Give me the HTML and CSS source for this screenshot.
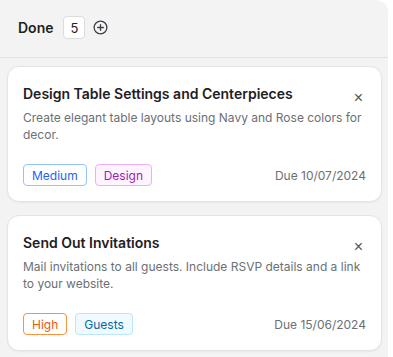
FILE: index.html
```html
<!DOCTYPE html>
<html lang="en">
<head>
    <meta charset="UTF-8">
    <meta name="viewport" content="width=device-width, initial-scale=1.0">
    <title>Board - Done</title>
    <link rel="stylesheet" href="styles.css">
</head>
<body>
    <div class="column">
        <div class="column-header">
            <h2>Done</h2>
            <span class="count">5</span>
            <button class="add-btn" aria-label="Add task">
                <svg width="15" height="15" viewBox="0 0 16 16" fill="none" stroke="#3f3f46" stroke-width="1.4" stroke-linecap="round">
                    <circle cx="8" cy="8" r="6.8"/>
                    <path d="M8 5v6M5 8h6"/>
                </svg>
            </button>
        </div>

        <div class="cards">
            <div class="card">
                <div class="card-top">
                    <h3>Design Table Settings and Centerpieces</h3>
                    <button class="close-btn" aria-label="Remove">&times;</button>
                </div>
                <p class="desc">Create elegant table layouts using Navy and Rose colors for decor.</p>
                <div class="card-foot">
                    <span class="tag tag-medium">Medium</span>
                    <span class="tag tag-design">Design</span>
                    <span class="due">Due 10/07/2024</span>
                </div>
            </div>

            <div class="card">
                <div class="card-top">
                    <h3>Send Out Invitations</h3>
                    <button class="close-btn" aria-label="Remove">&times;</button>
                </div>
                <p class="desc">Mail invitations to all guests. Include RSVP details and a link to your website.</p>
                <div class="card-foot">
                    <span class="tag tag-high">High</span>
                    <span class="tag tag-guests">Guests</span>
                    <span class="due">Due 15/06/2024</span>
                </div>
            </div>
        </div>
    </div>
</body>
</html>
```

FILE: styles.css
```css
body {
    margin: 0;
    font-family: Inter, "Noto Sans", Arial, sans-serif;
    background: #fff;
    color: #1f1f1f;
}

.column {
    width: 388px;
    height: 357px;
    background: #f3f3f3;
    border-top-right-radius: 12px;
    box-sizing: border-box;
    overflow: hidden;
}

.column-header {
    display: flex;
    align-items: center;
    height: 58px;
    padding: 0 18px 2px;
    border-bottom: 1px solid #e2e2e2;
    box-sizing: border-box;
}

.column-header h2 {
    margin: 0 10px 0 0;
    font-size: 14px;
    font-weight: 600;
    color: #1f1f1f;
}

.count {
    display: inline-flex;
    align-items: center;
    justify-content: center;
    width: 22px;
    height: 23px;
    box-sizing: border-box;
    background: #fff;
    border: 1px solid #dcdcdc;
    border-radius: 4px;
    font-size: 13px;
    color: #222;
}

.add-btn {
    display: flex;
    align-items: center;
    background: none;
    border: none;
    padding: 0;
    margin-left: 8px;
    cursor: pointer;
}

.cards {
    display: flex;
    flex-direction: column;
    gap: 13px;
    padding: 8px 6px 0 7px;
}

.card {
    background: #fff;
    border: 1px solid #e4e4e4;
    border-radius: 12px;
    padding: 17px 15px 15px;
    box-shadow: 0 1px 2px rgba(0,0,0,0.05);
}

.card-top {
    display: flex;
    justify-content: space-between;
    align-items: flex-start;
}

.card-top h3 {
    margin: 0;
    font-size: 14px;
    line-height: 20px;
    font-weight: 600;
    color: #1f2023;
}

.close-btn {
    background: none;
    border: none;
    padding: 0;
    margin: 6px 3px 0 0;
    font-size: 16px;
    line-height: 16px;
    color: #555;
    cursor: pointer;
}

.desc {
    margin: 3px 0 0;
    font-size: 12px;
    line-height: 17px;
    color: #6b6f76;
}

.card-foot {
    display: flex;
    align-items: center;
    gap: 8px;
    margin-top: 21px;
}

.tag {
    display: inline-flex;
    align-items: center;
    height: 22px;
    padding: 0 8px;
    box-sizing: border-box;
    border: 1px solid;
    border-radius: 4px;
    font-size: 12px;
}

.tag-medium {
    border-color: #93c5fd;
    color: #2563eb;
    background: #fff;
}

.tag-design {
    border-color: #f0abfc;
    color: #a21caf;
    background: #fdf4ff;
}

.tag-high {
    border-color: #fb923c;
    color: #ea580c;
    background: #fff;
}

.tag-guests {
    border-color: #bae6fd;
    color: #0369a1;
    background: #f0f9ff;
}

.due {
    margin-left: auto;
    font-size: 12px;
    color: #6b6f76;
}
```
